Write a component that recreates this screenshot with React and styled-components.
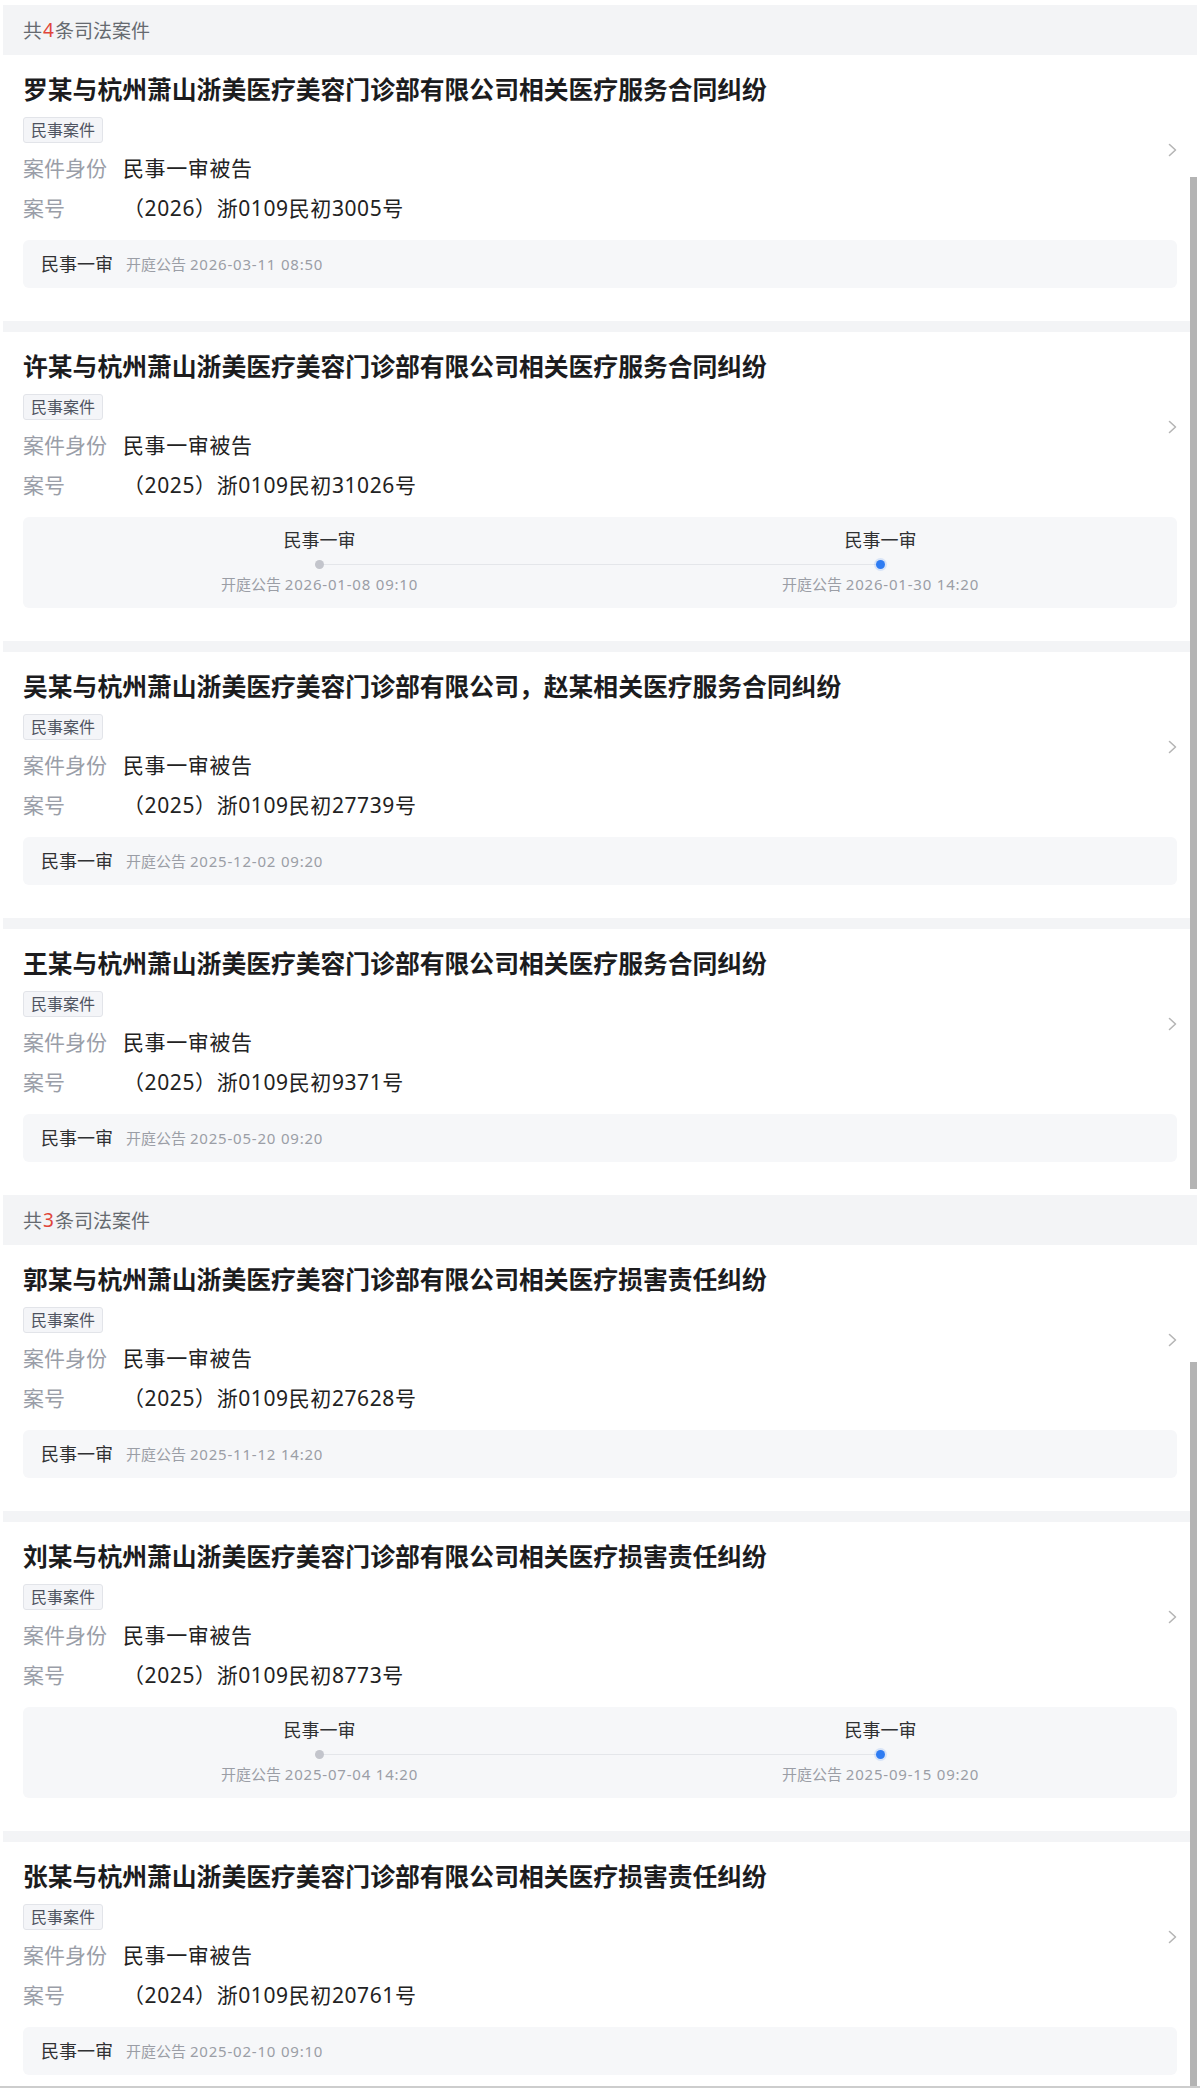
import React from "react";
import styled, { createGlobalStyle } from "styled-components";

const GlobalStyle = createGlobalStyle`
  html, body {
    margin: 0;
    padding: 0;
    background: #fff;
    overflow: hidden;
  }
  body {
    font-family: "Noto Sans", "Noto Sans CJK SC", sans-serif;
  }
`;

const Frame = styled.div`
  height: 2088px;
  box-sizing: border-box;
  padding: 5px 3px 0;
  border-bottom: 2px solid #cdcdcd;
  overflow: hidden;
`;

const Group = styled.section`
  position: relative;
`;

const GroupHeader = styled.div`
  height: 50px;
  display: flex;
  align-items: center;
  padding: 0 20px;
  background: #f3f4f6;
  font-size: 19px;
  color: #666a70;
`;

const Count = styled.span`
  color: #e0453a;
  margin: 0 1px;
`;

const Thumb = styled.div`
  position: absolute;
  right: 0;
  top: ${(p) => p.$top}px;
  bottom: ${(p) => p.$bottom}px;
  width: 7px;
  background: #b4b4b4;
`;

const Card = styled.article`
  padding: 16px 20px 33px;
  background: #fff;
  & + & {
    border-top: 11px solid #f3f4f6;
  }
`;

const Info = styled.div`
  display: flex;
  align-items: center;
`;

const InfoMain = styled.div`
  flex: 1;
  min-width: 0;
`;

const Title = styled.h3`
  margin: 0;
  font-size: 24.8px;
  line-height: 36px;
  font-weight: 700;
  color: #1c1c1e;
`;

const TagRow = styled.div`
  display: flex;
  margin-top: 10px;
`;

const Tag = styled.span`
  height: 26px;
  box-sizing: border-box;
  line-height: 24px;
  padding: 0 7px;
  font-size: 16px;
  color: #4f5461;
  background: #f4f5f8;
  border: 1px solid #e2e4e9;
  border-radius: 3px;
`;

const Fields = styled.div`
  margin-top: 5px;
`;

const Field = styled.div`
  display: flex;
  font-size: 21px;
  line-height: 40px;
`;

const Label = styled.span`
  width: 100px;
  flex-shrink: 0;
  color: #9a9ea8;
`;

const Value = styled.span`
  color: #222;
  letter-spacing: 0.6px;
`;

const Chevron = styled.svg`
  width: 9px;
  height: 14px;
  flex-shrink: 0;
  margin-left: 12px;
`;

const Stage = styled.div`
  margin-top: 12px;
  height: 48px;
  display: flex;
  align-items: center;
  gap: 13px;
  padding: 0 18px;
  background: #f6f7f9;
  border-radius: 6px;
`;

const StageName = styled.span`
  font-size: 18px;
  line-height: 24px;
  color: #303133;
`;

const StageMeta = styled.span`
  font-size: 15px;
  line-height: 20px;
  color: #9b9ea6;
`;

const Date = styled.span`
  letter-spacing: 0.8px;
`;

const Steps = styled.div`
  margin-top: 12px;
  display: grid;
  grid-template-columns: 1fr 1fr;
  padding: 11px 16px 14px;
  background: #f6f7f9;
  border-radius: 6px;
`;

const Step = styled.div`
  display: flex;
  flex-direction: column;
  align-items: center;
`;

const DotRow = styled.div`
  position: relative;
  width: 100%;
  height: 12px;
  margin: 6px 0 4px;
  display: flex;
  align-items: center;
  justify-content: center;
  &::after {
    content: "";
    position: absolute;
    top: 50%;
    height: 1px;
    background: #e4e6ea;
    left: ${(p) => (p.$first ? "50%" : "0")};
    right: ${(p) => (p.$first ? "0" : "50%")};
  }
`;

const Dot = styled.span`
  position: relative;
  z-index: 1;
  width: 9px;
  height: 9px;
  border-radius: 50%;
  background: ${(p) => (p.$active ? "#2f7cf2" : "#c3c5cc")};
  box-shadow: ${(p) => (p.$active ? "0 0 0 2px rgba(47,124,242,0.15)" : "none")};
`;

const ChevronIcon = () => (
  <Chevron viewBox="0 0 9 14">
    <polyline points="1.5,1.5 7.5,7 1.5,12.5" fill="none" stroke="#b5b5b5" strokeWidth="1.6" strokeLinecap="round" strokeLinejoin="round" />
  </Chevron>
);

const company = "杭州萧山浙美医疗美容门诊部有限公司";

const groups = [
  {
    count: 4,
    thumb: { top: 172, bottom: 6 },
    cases: [
      { title: `罗某与${company}相关医疗服务合同纠纷`, no: "（2026）浙0109民初3005号", stages: ["2026-03-11 08:50"] },
      { title: `许某与${company}相关医疗服务合同纠纷`, no: "（2025）浙0109民初31026号", stages: ["2026-01-08 09:10", "2026-01-30 14:20"] },
      { title: `吴某与${company}，赵某相关医疗服务合同纠纷`, no: "（2025）浙0109民初27739号", stages: ["2025-12-02 09:20"] },
      { title: `王某与${company}相关医疗服务合同纠纷`, no: "（2025）浙0109民初9371号", stages: ["2025-05-20 09:20"] },
    ],
  },
  {
    count: 3,
    thumb: { top: 167, bottom: 0 },
    cases: [
      { title: `郭某与${company}相关医疗损害责任纠纷`, no: "（2025）浙0109民初27628号", stages: ["2025-11-12 14:20"] },
      { title: `刘某与${company}相关医疗损害责任纠纷`, no: "（2025）浙0109民初8773号", stages: ["2025-07-04 14:20", "2025-09-15 09:20"] },
      { title: `张某与${company}相关医疗损害责任纠纷`, no: "（2024）浙0109民初20761号", stages: ["2025-02-10 09:10"] },
    ],
  },
];

function CaseCard({ title, no, stages }) {
  return (
    <Card>
      <Info>
        <InfoMain>
          <Title>{title}</Title>
          <TagRow>
            <Tag>民事案件</Tag>
          </TagRow>
          <Fields>
            <Field>
              <Label>案件身份</Label>
              <Value>民事一审被告</Value>
            </Field>
            <Field>
              <Label>案号</Label>
              <Value>{no}</Value>
            </Field>
          </Fields>
        </InfoMain>
        <ChevronIcon />
      </Info>
      {stages.length === 1 ? (
        <Stage>
          <StageName>民事一审</StageName>
          <StageMeta>
            开庭公告 <Date>{stages[0]}</Date>
          </StageMeta>
        </Stage>
      ) : (
        <Steps>
          {stages.map((date, i) => (
            <Step key={date}>
              <StageName>民事一审</StageName>
              <DotRow $first={i === 0}>
                <Dot $active={i === stages.length - 1} />
              </DotRow>
              <StageMeta>
                开庭公告 <Date>{date}</Date>
              </StageMeta>
            </Step>
          ))}
        </Steps>
      )}
    </Card>
  );
}

export default function App() {
  return (
    <>
      <GlobalStyle />
      <Frame>
        {groups.map((g) => (
          <Group key={g.count}>
            <GroupHeader>
              共<Count>{g.count}</Count>条司法案件
            </GroupHeader>
            {g.cases.map((c) => (
              <CaseCard key={c.no} {...c} />
            ))}
            <Thumb $top={g.thumb.top} $bottom={g.thumb.bottom} />
          </Group>
        ))}
      </Frame>
    </>
  );
}
